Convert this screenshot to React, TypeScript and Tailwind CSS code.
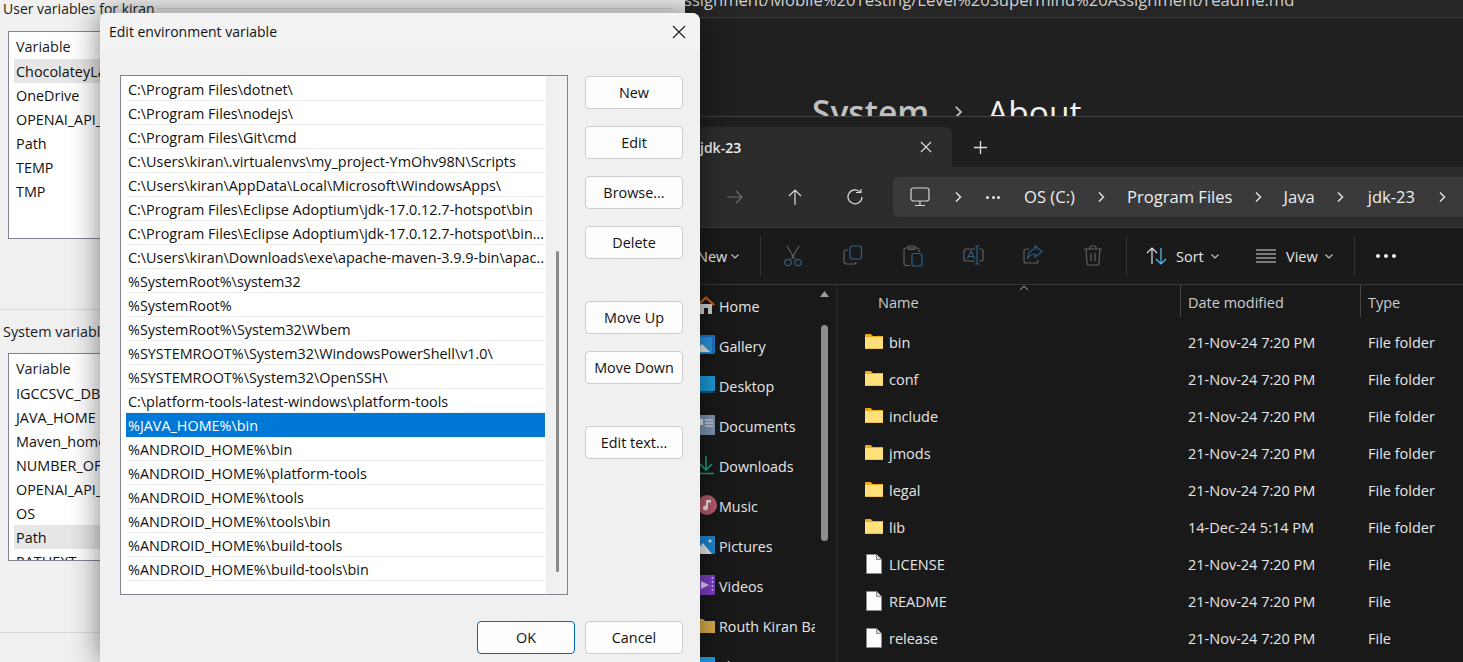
import type { ReactNode } from "react";

const pathRows = [
  "C:\\Program Files\\dotnet\\",
  "C:\\Program Files\\nodejs\\",
  "C:\\Program Files\\Git\\cmd",
  "C:\\Users\\kiran\\.virtualenvs\\my_project-YmOhv98N\\Scripts",
  "C:\\Users\\kiran\\AppData\\Local\\Microsoft\\WindowsApps\\",
  "C:\\Program Files\\Eclipse Adoptium\\jdk-17.0.12.7-hotspot\\bin",
  "C:\\Program Files\\Eclipse Adoptium\\jdk-17.0.12.7-hotspot\\bin...",
  "C:\\Users\\kiran\\Downloads\\exe\\apache-maven-3.9.9-bin\\apac...",
  "%SystemRoot%\\system32",
  "%SystemRoot%",
  "%SystemRoot%\\System32\\Wbem",
  "%SYSTEMROOT%\\System32\\WindowsPowerShell\\v1.0\\",
  "%SYSTEMROOT%\\System32\\OpenSSH\\",
  "C:\\platform-tools-latest-windows\\platform-tools",
  "%JAVA_HOME%\\bin",
  "%ANDROID_HOME%\\bin",
  "%ANDROID_HOME%\\platform-tools",
  "%ANDROID_HOME%\\tools",
  "%ANDROID_HOME%\\tools\\bin",
  "%ANDROID_HOME%\\build-tools",
  "%ANDROID_HOME%\\build-tools\\bin",
];

const userVars = ["ChocolateyLastPathUpdate", "OneDrive", "OPENAI_API_KEY", "Path", "TEMP", "TMP"];
const systemVars = ["IGCCSVC_DB", "JAVA_HOME", "Maven_home", "NUMBER_OF_PROCESSORS", "OPENAI_API_KEY", "OS", "Path", "PATHEXT"];

const files = [
  { name: "bin", date: "21-Nov-24 7:20 PM", type: "File folder", folder: true },
  { name: "conf", date: "21-Nov-24 7:20 PM", type: "File folder", folder: true },
  { name: "include", date: "21-Nov-24 7:20 PM", type: "File folder", folder: true },
  { name: "jmods", date: "21-Nov-24 7:20 PM", type: "File folder", folder: true },
  { name: "legal", date: "21-Nov-24 7:20 PM", type: "File folder", folder: true },
  { name: "lib", date: "14-Dec-24 5:14 PM", type: "File folder", folder: true },
  { name: "LICENSE", date: "21-Nov-24 7:20 PM", type: "File", folder: false },
  { name: "README", date: "21-Nov-24 7:20 PM", type: "File", folder: false },
  { name: "release", date: "21-Nov-24 7:20 PM", type: "File", folder: false },
];

function VarList({ rows, selected, height }: { rows: string[]; selected: string; height: string }) {
  return (
    <div className={`ml-[8px] w-[640px] border border-[#7f8490] bg-white px-[5px] overflow-hidden ${height}`}>
      <div className="h-[27px] pl-[2px] leading-[29px] text-[#1a1a1a]">Variable</div>
      {rows.map((r) => (
        <div key={r} className={`h-[24px] pl-[2px] leading-[26px] text-[#111] ${r === selected ? "bg-[#e6e6e6]" : ""}`}>
          {r}
        </div>
      ))}
    </div>
  );
}

function DlgButton({ label, primary }: { label: string; primary?: boolean }) {
  return (
    <div
      className={`w-[98px] h-[33px] rounded-[4px] border bg-[#fdfdfd] flex items-center justify-center text-[#111] ${
        primary ? "border-[#0067c0]" : "border-[#cccccc]"
      }`}
    >
      {label}
    </div>
  );
}

function Chevron({ color = "#e0e0e0", size = 12 }: { color?: string; size?: number }) {
  return (
    <svg width={size} height={size} viewBox="0 0 12 12" fill="none" stroke={color} strokeWidth="1.5">
      <path d="M4 1.500 8.500 6 4 10.500" />
    </svg>
  );
}

function Caret() {
  return (
    <svg width="8" height="5" viewBox="0 0 8 5" fill="none" stroke="#c8c8c8" strokeWidth="1.1">
      <path d="M.5.5 4 4 7.500.5" />
    </svg>
  );
}

function FolderIcon() {
  return (
    <svg width="18" height="15" viewBox="0 0 18 15">
      <path d="M0 1.200C0 .5.500 0 1.200 0h4.500l2 2H18v2H0z" fill="#f2a91a" />
      <path d="M0 3h18v10.800c0 .7-.5 1.200-1.200 1.200H1.200C.5 15 0 14.500 0 13.800z" fill="#ffe07a" />
      <rect x="0" y="14" width="18" height="1" fill="#eec04e" />
    </svg>
  );
}

function FileIcon() {
  return (
    <svg width="16" height="20" viewBox="0 0 16 20">
      <path d="M.5.5h10l5 5v14H.5z" fill="#fdfdfd" stroke="#8a8a8a" />
      <path d="M10.500.5v5h5" fill="#d8d8d8" stroke="#8a8a8a" />
    </svg>
  );
}

// two-tone command bar icons, disabled state
const toolIcons: ReactNode[] = [
  <svg key="cut" width="20" height="22" viewBox="0 0 20 22" fill="none" strokeWidth="1.200">
    <path d="M4 1l7.500 13M16 1 8.500 14" stroke="#5f5f5f" />
    <circle cx="5" cy="17.500" r="3.200" stroke="#2d5f85" />
    <circle cx="15" cy="17.500" r="3.200" stroke="#2d5f85" />
  </svg>,
  <svg key="copy" width="20" height="20" viewBox="0 0 20 20" fill="none" strokeWidth="1.200">
    <path d="M5 5H3a2 2 0 0 0-2 2v9a3 3 0 0 0 3 3h7a2 2 0 0 0 2-2" stroke="#5f5f5f" />
    <rect x="7" y="1" width="11.500" height="13" rx="2.500" stroke="#2d5f85" />
  </svg>,
  <svg key="paste" width="20" height="22" viewBox="0 0 20 22" fill="none" strokeWidth="1.200">
    <path d="M7 20.500H3a2 2 0 0 1-2-2V5a2 2 0 0 1 2-2h11a2 2 0 0 1 2 2v2" stroke="#5f5f5f" />
    <rect x="5" y="1" width="7" height="3.500" rx="1" stroke="#5f5f5f" />
    <rect x="9" y="8.500" width="10" height="12.500" rx="2" stroke="#2d5f85" />
  </svg>,
  <svg key="rename" width="21" height="20" viewBox="0 0 21 20" fill="none" strokeWidth="1.200">
    <path d="M12 4H3a2 2 0 0 0-2 2v8a2 2 0 0 0 2 2h9M16 4h2a2 2 0 0 1 2 2v8a2 2 0 0 1-2 2h-2" stroke="#5f5f5f" />
    <path d="M4.500 13.500 8 6l3.500 7.500M5.500 11.500h5M14 1v18M11.500 1h5M11.500 19h5" stroke="#2d5f85" />
  </svg>,
  <svg key="share" width="20" height="20" viewBox="0 0 20 20" fill="none" strokeWidth="1.200">
    <path d="M6 4H3a2 2 0 0 0-2 2v10a2 2 0 0 0 2 2h10a2 2 0 0 0 2-2v-1" stroke="#5f5f5f" />
    <path d="M12 1l7 5.500-7 5.500V9C8 9 6 10.500 4.500 14 4.500 8.500 7.500 4.500 12 4z" stroke="#2d5f85" />
  </svg>,
  <svg key="trash" width="20" height="21" viewBox="0 0 20 21" fill="none" stroke="#5f5f5f" strokeWidth="1.200">
    <path d="M1 4h18M7 4V2.500A1.500 1.500 0 0 1 8.500 1h3A1.500 1.500 0 0 1 13 2.500V4M3 4l1 14a2 2 0 0 0 2 2h8a2 2 0 0 0 2-2l1-14M8 8v8M12 8v8" />
  </svg>,
];

const navItems: { label: string; icon: ReactNode }[] = [
  {
    label: "Home",
    icon: (
      <svg width="18" height="20" viewBox="0 0 18 20">
        <path d="M3 9h12v10H11v-6H7v6H3z" fill="#cfcfcf" />
        <path d="M0 9.500 9 1l9 8.500-1.500 1.500L9 4 1.500 11z" fill="#c9611d" />
      </svg>
    ),
  },
  {
    label: "Gallery",
    icon: (
      <svg width="18" height="20" viewBox="0 0 18 20">
        <rect x="1" y="0" width="17" height="19" rx="1" fill="#1f74c4" />
        <rect x="0" y="2" width="15" height="16" fill="#2a95dd" />
        <path d="M0 15l5-6 8 8H0z" fill="#e8e8e8" />
      </svg>
    ),
  },
  {
    label: "Desktop",
    icon: (
      <svg width="18" height="18" viewBox="0 0 18 18">
        <rect x="0" y="0" width="18" height="15" rx="1" fill="#1c9bd8" />
        <rect x="0" y="15" width="16" height="2" fill="#15567e" />
      </svg>
    ),
  },
  {
    label: "Documents",
    icon: (
      <svg width="18" height="20" viewBox="0 0 18 20">
        <rect x="0" y="0" width="18" height="20" rx="1" fill="#7e94b0" />
        <path d="M8 5h8M8 8h8M8 11h8" stroke="#f0f0f0" />
        <rect x="1" y="4" width="5" height="6" fill="#dfe5ec" />
      </svg>
    ),
  },
  {
    label: "Downloads",
    icon: (
      <svg width="18" height="20" viewBox="0 0 18 20" fill="none" stroke="#17a085" strokeWidth="1.600">
        <path d="M9 1v13M3 9l6 6 6-6M1 18.500h16" />
      </svg>
    ),
  },
  {
    label: "Music",
    icon: (
      <svg width="20" height="20" viewBox="0 0 20 20">
        <circle cx="10" cy="10" r="10" fill="#b45a6c" />
        <path d="M9 5h5v2.500h-3V13a2.500 2.500 0 1 1-2-2.400z" fill="#f0e4e4" />
      </svg>
    ),
  },
  {
    label: "Pictures",
    icon: (
      <svg width="18" height="18" viewBox="0 0 18 18">
        <rect width="18" height="18" rx="1" fill="#1f86d0" />
        <path d="M0 18v-4l6-7 9 11z" fill="#e8e8e8" />
        <circle cx="13" cy="5" r="1.500" fill="#e8e8e8" />
      </svg>
    ),
  },
  {
    label: "Videos",
    icon: (
      <svg width="18" height="20" viewBox="0 0 18 20">
        <rect width="18" height="20" rx="1" fill="#7b3fc4" />
        <path d="M4 6l8 4-8 4z" fill="#ded2f2" />
        <path d="M15.500 2v16" stroke="#c9b2ea" strokeDasharray="2 2" strokeWidth="1.500" />
      </svg>
    ),
  },
  {
    label: "Routh Kiran Ba",
    icon: (
      <svg width="18" height="15" viewBox="0 0 18 15">
        <path d="M0 1h6l2 2h10v12H0z" fill="#dcae4a" />
      </svg>
    ),
  },
  {
    label: "This PC",
    icon: (
      <svg width="18" height="16" viewBox="0 0 18 16">
        <rect width="18" height="14" rx="1" fill="#1c9bd8" />
      </svg>
    ),
  },
];

function BackWindow() {
  return (
    <div className="absolute left-0 top-0 w-[685px] h-[662px] bg-[#f0f0f0] text-[14.4px] text-[#1a1a1a] overflow-hidden">
      <div className="h-[310px] border-b border-[#d9d9d9]">
        <div className="flex items-center h-[17px] pl-[3px]">
          <span className="whitespace-nowrap pr-[2px] text-[14px]">User variables for kiran</span>
          <div className="w-[515px] h-[1px] bg-[#d4d4d4]" />
        </div>
        <div className="mt-[14px]">
          <VarList rows={userVars} selected="ChocolateyLastPathUpdate" height="h-[208px]" />
        </div>
      </div>
      <div className="h-[323px] border-b border-[#d9d9d9]">
        <div className="h-[43px] pl-[3px] pt-[12px] leading-[20px]">System variables</div>
        <VarList rows={systemVars} selected="Path" height="h-[208px]" />
      </div>
    </div>
  );
}

function EditDialog() {
  return (
    <div className="absolute left-[100px] top-[13px] w-[600px] h-[649px] bg-[#f0f0f0] rounded-t-[8px] shadow-[0_0_30px_rgba(0,0,0,0.5)] text-[14.4px] text-[#111] overflow-hidden">
      <div className="h-[37px] bg-[#f3f3f3] flex items-center justify-between pl-[9px] pr-[14px]">
        <span className="text-[14px]">Edit environment variable</span>
        <svg width="14" height="14" viewBox="0 0 14 14" stroke="#1a1a1a" strokeWidth="1.100">
          <path d="M1 1l12 12M13 1 1 13" />
        </svg>
      </div>
      <div className="flex pl-[20px] pt-[25px]">
        <div className="w-[448px] h-[520px] border border-[#7f8490] bg-white flex">
          <div className="w-[425px] pl-[5px] pt-[1px]">
            {pathRows.map((r, i) =>
              i === 14 ? (
                <div key={r} className="w-[419px] h-[24px] bg-[#0078d7] text-white pl-[2px] leading-[25px] whitespace-nowrap">
                  {r}
                </div>
              ) : (
                <div key={r} className="w-[419px] h-[24px] border-b border-[#efefef] pl-[2px] leading-[25px] whitespace-nowrap overflow-hidden">
                  {r}
                </div>
              )
            )}
          </div>
          <div className="w-[21px] bg-[#f0f0f0] flex justify-center pl-[1px]">
            <div className="mt-[175px] w-[3px] h-[321px] bg-[#8a8a8a] rounded-full" />
          </div>
        </div>
        <div className="ml-[17px] flex flex-col pt-[1px]">
          <div className="flex flex-col gap-[17px]">
            <DlgButton label="New" />
            <DlgButton label="Edit" />
            <DlgButton label="Browse..." />
            <DlgButton label="Delete" />
          </div>
          <div className="mt-[42px] flex flex-col gap-[17px]">
            <DlgButton label="Move Up" />
            <DlgButton label="Move Down" />
          </div>
          <div className="mt-[42px]">
            <DlgButton label="Edit text..." />
          </div>
        </div>
      </div>
      <div className="mt-[26px] flex justify-end gap-[10px] pr-[17px]">
        <DlgButton label="OK" primary />
        <DlgButton label="Cancel" />
      </div>
    </div>
  );
}

function TopDarkWindow() {
  return (
    <div className="absolute left-[685px] top-0 w-[778px] h-[117px] bg-[#202020] overflow-hidden text-white">
      <div className="h-[18px] bg-[#262626] border-b border-[#3c3c3c] overflow-hidden">
        <div className="-mt-[12px] ml-[-1px] text-[16.6px] leading-[24px] text-[#d0d0d0] whitespace-nowrap">
          ssignment/Mobile%20Testing/Level%20Supermind%20Assignment/readme.md
        </div>
      </div>
      <div className="h-[98px] overflow-hidden pl-[127px] pt-[71px]">
        <div className="flex items-center text-[33.500px] leading-[46px] font-medium text-[#f2f2f2]">
          <span className="text-[#c0c0c0] font-semibold">System</span>
          <span className="mx-[22px]">
            <Chevron color="#c8c8c8" size={14} />
          </span>
          <span>About</span>
        </div>
      </div>
      <div className="h-[1px] bg-[#404040]" />
    </div>
  );
}

function Explorer() {
  return (
    <div className="absolute left-[685px] top-[117px] w-[778px] h-[545px] bg-[#191919] overflow-hidden text-[14.5px] text-[#e6e6e6]">
      {/* tabs */}
      <div className="h-[50px] bg-[#1f1f1f] flex items-end">
        <div className="w-[267px] h-[40px] bg-[#2c2c2c] rounded-t-[8px] flex items-center justify-between pl-[15px] pr-[20px]">
          <span className="font-semibold text-[#f0f0f0] text-[14px]">jdk-23</span>
          <svg width="12" height="12" viewBox="0 0 12 12" stroke="#e0e0e0" strokeWidth="1.100">
            <path d="M1 1l10 10M11 1 1 11" />
          </svg>
        </div>
        <div className="h-[40px] flex items-center ml-[22px]">
          <svg width="13" height="13" viewBox="0 0 13 13" stroke="#e0e0e0" strokeWidth="1.300">
            <path d="M6.500 0v13M0 6.500h13" />
          </svg>
        </div>
      </div>
      {/* nav + address */}
      <div className="h-[61px] bg-[#2c2c2c] border-b border-[#3e3e3e] flex items-start pt-[10px]">
        <div className="w-[208px] h-[40px] flex items-center pl-[42px] gap-[45px]">
          <svg width="16" height="14" viewBox="0 0 16 14" fill="none" stroke="#6f6f6f" strokeWidth="1.200">
            <path d="M0 7h15M9 1l6 6-6 6" />
          </svg>
          <svg width="14" height="16" viewBox="0 0 14 16" fill="none" stroke="#dcdcdc" strokeWidth="1.200">
            <path d="M7 16V1M1 7l6-6 6 6" />
          </svg>
          <svg width="16" height="16" viewBox="0 0 16 16" fill="none" stroke="#dcdcdc" strokeWidth="1.200">
            <path d="M13.500 3.500A7 7 0 1 0 15 8M9 3.500h5V0" />
          </svg>
        </div>
        <div className="flex-1 h-[40px] bg-[#3a3a3a] rounded-l-[6px] flex items-center whitespace-nowrap text-[#eeeeee] text-[16.6px]">
          <span className="ml-[17px]">
            <svg width="20" height="20" viewBox="0 0 20 20" fill="none" stroke="#d4d4d4" strokeWidth="1.200">
              <rect x="1" y="1" width="18" height="13" rx="2.500" />
              <path d="M10 14v4M5 18.500h10" />
            </svg>
          </span>
          <span className="ml-[22px]">
            <Chevron />
          </span>
          <span className="ml-[22px] flex gap-[2.500px]">
            <i className="w-[3px] h-[3px] rounded-full bg-[#e8e8e8]" />
            <i className="w-[3px] h-[3px] rounded-full bg-[#e8e8e8]" />
            <i className="w-[3px] h-[3px] rounded-full bg-[#e8e8e8]" />
          </span>
          <span className="ml-[24px]">OS (C:)</span>
          <span className="ml-[20px]">
            <Chevron />
          </span>
          <span className="ml-[20px]">Program Files</span>
          <span className="ml-[19px]">
            <Chevron />
          </span>
          <span className="ml-[20px]">Java</span>
          <span className="ml-[19px]">
            <Chevron />
          </span>
          <span className="ml-[22px]">jdk-23</span>
          <span className="ml-[21px]">
            <Chevron />
          </span>
        </div>
      </div>
      {/* command bar */}
      <div className="h-[57px] bg-[#1a1a1a] border-b border-[#3a3a3a] flex items-center">
        <span className="ml-[12px] w-[30px] pt-[2px]">New</span>
        <span className="ml-[4px]">
          <Caret />
        </span>
        <div className="ml-[21px] w-[1px] h-[40px] bg-[#333]" />
        <div className="ml-[2px] flex">
          {toolIcons.map((icon, i) => (
            <div key={i} className="w-[60px] flex justify-center">
              {icon}
            </div>
          ))}
        </div>
        <div className="ml-[3px] w-[1px] h-[40px] bg-[#333]" />
        <svg className="ml-[19px]" width="22" height="18" viewBox="0 0 22 18" fill="none" strokeWidth="1.200">
          <path d="M6 17V1M1 6l5-5 5 5" stroke="#e0e0e0" />
          <path d="M15 1v16M10 12l5 5 5-5" stroke="#4cc2ff" />
        </svg>
        <span className="ml-[8px] w-[32px] pt-[2px]">Sort</span>
        <span className="ml-[3px]">
          <Caret />
        </span>
        <svg className="ml-[37px]" width="20" height="14" viewBox="0 0 20 14" stroke="#dcdcdc" strokeWidth="1.200">
          <path d="M0 1h20M0 5h20M0 9h20M0 13h20" />
        </svg>
        <span className="ml-[10px] w-[35px] pt-[2px]">View</span>
        <span className="ml-[4px]">
          <Caret />
        </span>
        <div className="ml-[21px] w-[1px] h-[40px] bg-[#333]" />
        <div className="ml-[21px] flex gap-[4px]">
          <i className="w-[4px] h-[4px] rounded-full bg-[#f0f0f0]" />
          <i className="w-[4px] h-[4px] rounded-full bg-[#f0f0f0]" />
          <i className="w-[4px] h-[4px] rounded-full bg-[#f0f0f0]" />
        </div>
      </div>
      {/* body */}
      <div className="flex h-[377px]">
        <div className="w-[153px] border-r-[2px] border-[#242424] flex">
          <div className="w-[130px] overflow-hidden text-[14.3px]">
            {navItems.map((n) => (
              <div key={n.label} className="h-[40px] flex items-center whitespace-nowrap overflow-hidden">
                <div className="w-[34px] pl-[12px] shrink-0">{n.icon}</div>
                <span className="pt-[4px]">{n.label}</span>
              </div>
            ))}
          </div>
          <div className="w-[21px] flex flex-col items-center pt-[6px] pr-[2px]">
            <svg width="9" height="6" viewBox="0 0 9 6">
              <path d="M4.500 0 9 6H0z" fill="#9a9a9a" />
            </svg>
            <div className="mt-[28px] w-[7px] h-[216px] rounded-full bg-[#8d8d8d]" />
          </div>
        </div>
        <div className="flex-1 relative">
          <svg className="absolute left-[181px] top-0" width="10" height="6" viewBox="0 0 10 6" fill="none" stroke="#b0b0b0">
            <path d="M1 5l4-4 4 4" />
          </svg>
          <div className="h-[32px] flex items-center text-[#cfcfcf]">
            <span className="ml-[40px] w-[302px] pt-[4px]">Name</span>
            <div className="w-[1px] h-[32px] bg-[#444]" />
            <span className="ml-[7px] w-[172px] pt-[4px]">Date modified</span>
            <div className="w-[1px] h-[32px] bg-[#444]" />
            <span className="ml-[7px] pt-[4px]">Type</span>
          </div>
          <div className="pt-[6px]">
            {files.map((f) => (
              <div key={f.name} className="h-[37px] flex items-center">
                <div className="ml-[27px] w-[24px] flex">
                  {f.folder ? <FolderIcon /> : <span className="ml-[1px]"><FileIcon /></span>}
                </div>
                <span className="w-[299px] pt-[2px]">{f.name}</span>
                <span className="w-[180px] pt-[2px]">{f.date}</span>
                <span className="pt-[2px]">{f.type}</span>
              </div>
            ))}
          </div>
        </div>
      </div>
    </div>
  );
}

export default function App() {
  return (
    <div className="relative w-[1463px] h-[662px] overflow-hidden bg-[#f0f0f0] font-['Open_Sans','Noto_Sans',sans-serif]">
      <BackWindow />
      <TopDarkWindow />
      <Explorer />
      <EditDialog />
    </div>
  );
}
